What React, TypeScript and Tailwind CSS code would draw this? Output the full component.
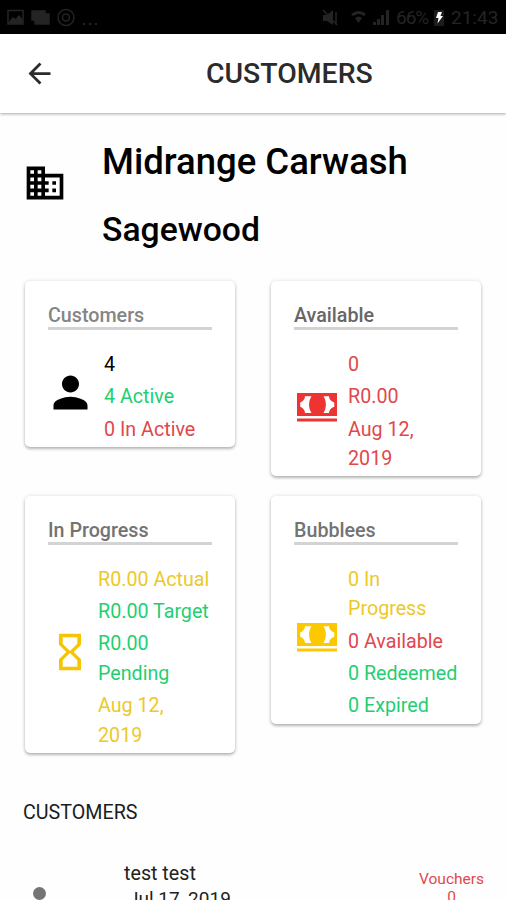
import type { ReactNode } from 'react';

const RED = 'text-[#e2474c]';
const GREEN = 'text-[#1fcf72]';
const YELLOW = 'text-[#ecc928]';

function Cash({ className }: { className: string }) {
  return (
    <svg viewBox="0 0 40 29" className={`h-[29px] w-10 shrink-0 ${className}`} fill="currentColor">
      <path d="M0 0H40V23H0z" />
      <path d="M0 25.500H40V28.500H0z" />
      <path
        fill="#fff"
        d="M8 3.200H14.500C11.300 8 11.300 15 14.500 20H8C8 17 6 15 3.200 13.800V9.400C6 8.200 8 6.200 8 3.200zM32 3.200H26.500C29.700 8 29.700 15 26.500 20H32C32 17 34 15 37.300 13.800V9.400C34 8.200 32 6.200 32 3.200z"
      />
    </svg>
  );
}

function Line({ className, children }: { className: string; children: ReactNode }) {
  return <p className={`mb-[2.8px] leading-[29.5px] ${className}`}>{children}</p>;
}

function Card({
  title,
  titleClass,
  iconClass,
  icon,
  children,
}: {
  title: string;
  titleClass: string;
  iconClass: string;
  icon: ReactNode;
  children: ReactNode;
}) {
  return (
    <section className="w-[210px] rounded-[5px] bg-white px-[23px] pt-[23px] shadow-[0_2px_3px_rgba(0,0,0,0.25),0_0_4px_rgba(0,0,0,0.12)]">
      <h3
        className={`h-[26px] w-[164px] border-b-[3px] border-[#d3d3d3] text-[19.7px] leading-[23px] font-medium whitespace-nowrap ${titleClass}`}
      >
        {title}
      </h3>
      <div className="flex items-center pt-5">
        <div className={`flex shrink-0 ${iconClass}`}>{icon}</div>
        <div className="whitespace-nowrap text-[19.7px]">{children}</div>
      </div>
    </section>
  );
}

function StatusBar() {
  return (
    <div className="flex h-[34px] items-center bg-black pt-px text-[#242424]">
      <svg viewBox="0 0 94 20" className="ml-[6px] h-5 w-[94px]" fill="none" stroke="currentColor" strokeWidth="1.5">
        <rect x="2" y="2.500" width="15" height="13.500" />
        <path d="M3 15l4-5 3 2 3-4 3 4v3z" fill="currentColor" />
        <path d="M26 3h13v9H26zM29 6h14v10H29z" fill="currentColor" />
        <circle cx="60" cy="9.500" r="8" />
        <circle cx="60" cy="9.500" r="3.500" />
        <path d="M77 16h2m4 0h2m4 0h2" strokeWidth="2" />
      </svg>
      <svg viewBox="0 0 70 20" className="ml-[221px] h-5 w-[70px]" fill="currentColor">
        <path d="M2 7h4l6-5v15l-6-4H2z" />
        <path d="M2 2l14 15M15 4v12" stroke="currentColor" strokeWidth="1.500" />
        <path d="M30 6q8-6 15 0l-2 2q-5-4-11 0zM34 10q4-3 7 0l-3.500 5z" />
        <path d="M52 14h3v3h-3zM56 11h3v6h-3zM60 7h3v10h-3zM65 2h3v15h-3z" />
      </svg>
      <span className="ml-[5px] w-[35px] text-[19px] leading-5 tracking-[-1px]">66%</span>
      <svg viewBox="0 0 12 18" className="ml-[2px] h-[18px] w-3">
        <rect x="1" y="1" width="10" height="16" rx="1" fill="#1c1c1c" />
        <path d="M5 3h4L7.500 7H10L4.500 14.500 5.500 9H3z" fill="#fff" />
      </svg>
      <span className="ml-[6px] text-[19px] leading-5">21:43</span>
    </div>
  );
}

export default function App() {
  return (
    <div className="h-[900px] w-[506px] overflow-hidden bg-[#fefefe] font-[Roboto,sans-serif] text-black">
      <StatusBar />
      <header className="flex h-[79px] items-center bg-white shadow-[0_1px_3px_rgba(0,0,0,0.35)]">
        <svg viewBox="0 0 24 24" className="ml-[23px] h-[33px] w-[33px]" fill="#2b2b2b">
          <path d="M20 11H7.830l5.590-5.590L12 4l-8 8 8 8 1.410-1.410L7.830 13H20v-2z" />
        </svg>
        <h1 className="ml-[150px] text-[28.4px] leading-8 font-medium text-[#2b2b2b]">CUSTOMERS</h1>
      </header>

      <div className="flex h-[168px] pt-[28px]">
        <svg viewBox="0 0 24 24" className="mt-5 ml-[23px] h-11 w-11 shrink-0">
          <path d="M12 7V3H2v18h20V7H12zM6 19H4v-2h2v2zm0-4H4v-2h2v2zm0-4H4V9h2v2zm0-4H4V5h2v2zm4 12H8v-2h2v2zm0-4H8v-2h2v2zm0-4H8V9h2v2zm0-4H8V5h2v2zm10 12h-8v-2h2v-2h-2v-2h2v-2h-2V9h8v10zm-2-8h-2v2h2v-2zm0 4h-2v2h2v-2z" />
        </svg>
        <div className="ml-[35px]">
          <h2 className="text-[36.5px] leading-[42px] font-medium">Midrange Carwash</h2>
          <h2 className="mt-[27px] text-[33.700px] leading-10 font-medium">Sagewood</h2>
        </div>
      </div>

      <main className="grid grid-cols-[210px_210px] items-start gap-x-9 gap-y-[19.5px] pl-[25px]">
        <Card
          title="Customers"
          titleClass="text-[#858585]"
          iconClass="w-14 pb-[11px]"
          icon={
            <svg viewBox="0 0 24 24" className="-ml-[3px] h-[51px] w-[51px]">
              <path d="M12 12c2.210 0 4-1.790 4-4s-1.790-4-4-4-4 1.790-4 4 1.790 4 4 4zm0 2c-2.670 0-8 1.340-8 4v2h16v-2c0-2.660-5.330-4-8-4z" />
            </svg>
          }
        >
          <Line className="">4</Line>
          <Line className={GREEN}>4 Active</Line>
          <Line className={RED}>0 In Active</Line>
        </Card>

        <Card
          title="Available"
          titleClass="text-[#666]"
          iconClass="w-[54px] pb-3 pl-[3px]"
          icon={<Cash className="text-[#ee3333]" />}
        >
          <Line className={RED}>0</Line>
          <Line className={RED}>R0.00</Line>
          <Line className={RED}>Aug 12,<br />2019</Line>
        </Card>

        <Card
          title="In Progress"
          titleClass="text-[#737373]"
          iconClass="w-[50px] pb-[13px]"
          icon={
            <svg viewBox="0 0 24 24" className="h-11 w-11" fill="#f7c500">
              <path d="M6 2v6h.010L6 8.010 10 12l-4 4 .010.010H6V22h12v-5.990h-.010L18 16l-4-4 4-3.990-.010-.010H18V2H6zm10 14.500V20H8v-3.500l4-4 4 4zm-4-5l-4-4V4h8v3.500l-4 4z" />
            </svg>
          }
        >
          <Line className={YELLOW}>R0.00 Actual</Line>
          <Line className={GREEN}>R0.00 Target</Line>
          <Line className={GREEN}>R0.00<br />Pending</Line>
          <Line className={YELLOW}>Aug 12,<br />2019</Line>
        </Card>

        <Card
          title="Bubblees"
          titleClass="text-[#737373]"
          iconClass="w-[54px] pb-[13px] pl-[3px]"
          icon={<Cash className="text-[#fcc900]" />}
        >
          <Line className={YELLOW}>0 In<br />Progress</Line>
          <Line className={RED}>0 Available</Line>
          <Line className={GREEN}>0 Redeemed</Line>
          <Line className={GREEN}>0 Expired</Line>
        </Card>
      </main>

      <h3 className="mt-[48px] ml-[23px] text-[19.7px] leading-6 text-[#1c1c1c]">CUSTOMERS</h3>
      <div className="mt-[35.5px] flex items-start">
        <span className="mt-[26px] ml-[33px] h-[13px] w-[13px] rounded-full bg-[#747474]" />
        <div className="ml-[78px] w-[260px] text-[19.7px] leading-[25px] text-[#222]">
          <p>test test</p>
          <p className="pl-[4px] text-[19px]">Jul 17, 2019</p>
        </div>
        <div className={`mt-[9px] ml-[35px] w-[65px] text-center text-[15.500px] leading-[18px] ${RED}`}>
          <p>Vouchers</p>
          <p>0</p>
        </div>
      </div>
    </div>
  );
}
